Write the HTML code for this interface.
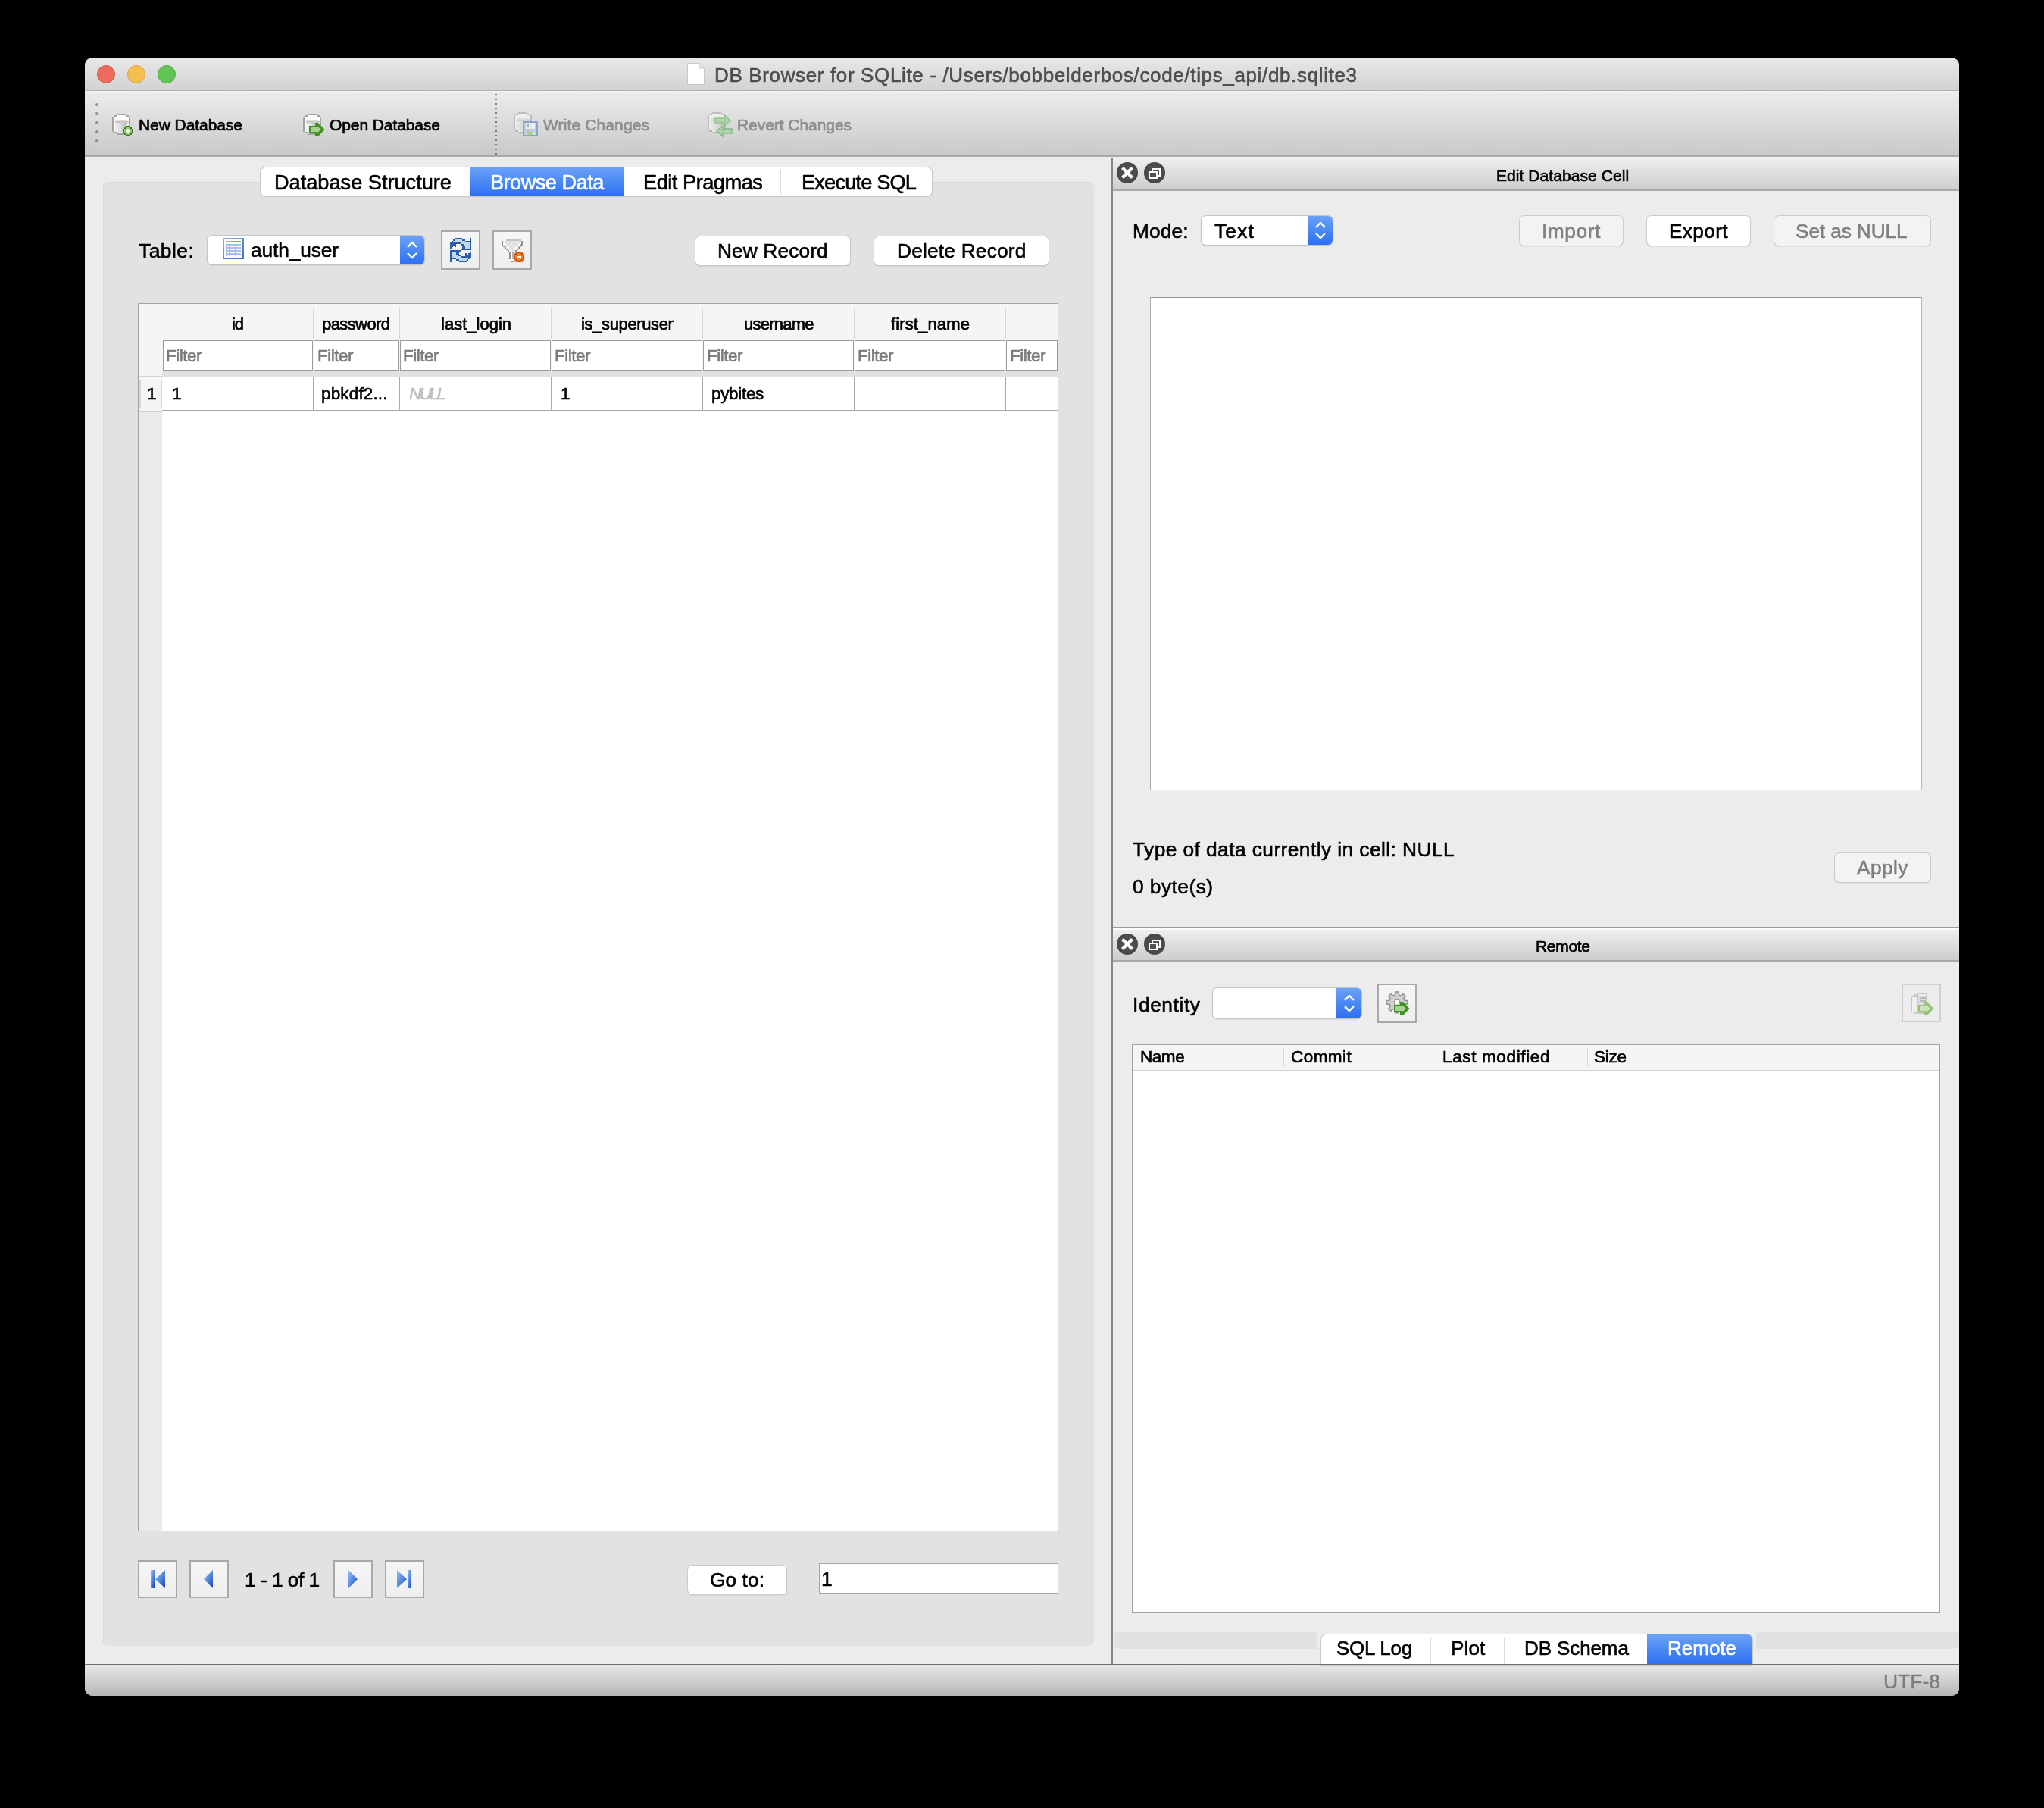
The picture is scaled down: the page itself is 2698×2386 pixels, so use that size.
<!DOCTYPE html>
<html><head><meta charset="utf-8"><style>
html,body{margin:0;padding:0;}
body{width:2698px;height:2386px;background:#000;position:relative;overflow:hidden;}
.a{position:absolute;}
.t{position:absolute;white-space:nowrap;line-height:1;font-family:"Liberation Sans",sans-serif;-webkit-font-smoothing:antialiased;will-change:transform;}
svg{overflow:visible}
</style></head><body>
<div class="a" style="left:112px;top:76px;width:2474px;height:2162px;background:#ececec;border-radius:10px;"></div>
<div class="a" style="left:112px;top:76px;width:2474px;height:43px;background:linear-gradient(#e8e8e8,#d2d2d2);border-radius:10px 10px 0 0;"></div>
<div class="a" style="left:112px;top:119px;width:2474px;height:1px;background:#adadad;"></div>
<div class="a" style="left:112px;top:120px;width:2474px;height:1px;background:#f6f6f6;"></div>
<div class="a" style="left:128px;top:86px;width:24px;height:24px;background:#ee6a5e;border:1px solid #d8574c;box-sizing:border-box;border-radius:50%;"></div>
<div class="a" style="left:168px;top:86px;width:24px;height:24px;background:#f5bf4f;border:1px solid #dba43b;box-sizing:border-box;border-radius:50%;"></div>
<div class="a" style="left:208px;top:86px;width:24px;height:24px;background:#61c454;border:1px solid #4fac42;box-sizing:border-box;border-radius:50%;"></div>
<svg class="a" style="left:906px;top:82px" width="25" height="31" viewBox="0 0 25 31"><path d="M1.5 1.5 H17 L23.5 8 V29.5 H1.5 Z" fill="#fff" stroke="#c8c8c8" stroke-width="1"/><path d="M17 1.5 V8 H23.5" fill="#e6e6e6" stroke="#c8c8c8" stroke-width="1"/></svg>
<div class="t" style="left:943.00px;top:85.90px;font-size:26px;color:#4d4d4d;font-weight:normal;font-style:normal;letter-spacing:0.642px;-webkit-text-stroke:0.6px #4d4d4d;">DB Browser for SQLite - /Users/bobbelderbos/code/tips_api/db.sqlite3</div>
<div class="a" style="left:112px;top:121px;width:2474px;height:84px;background:linear-gradient(#ececec,#c9c9c9);"></div>
<div class="a" style="left:112px;top:205px;width:2474px;height:2px;background:#a9a9a9;"></div>
<div class="a" style="left:112px;top:207px;width:2474px;height:1px;background:#f2f2f2;"></div>
<div class="a" style="left:126px;top:136px;width:4px;height:4px;background:#8e8e8e;border-radius:50%;"></div>
<div class="a" style="left:126px;top:148px;width:4px;height:4px;background:#8e8e8e;border-radius:50%;"></div>
<div class="a" style="left:126px;top:160px;width:4px;height:4px;background:#8e8e8e;border-radius:50%;"></div>
<div class="a" style="left:126px;top:172px;width:4px;height:4px;background:#8e8e8e;border-radius:50%;"></div>
<div class="a" style="left:126px;top:184px;width:4px;height:4px;background:#8e8e8e;border-radius:50%;"></div>
<div class="a" style="left:654px;top:124px;width:2px;height:80px;background:repeating-linear-gradient(#7a7a7a 0 2px, transparent 2px 6px);"></div>
<svg class="a" style="left:148px;top:148px;opacity:1.0" width="32" height="32" viewBox="0 0 16 16" shape-rendering="crispEdges"><rect x="3" y="1" width="6" height="1" fill="#a2a2a2"/><rect x="1" y="2" width="2" height="1" fill="#a2a2a2"/><rect x="3" y="2" width="6" height="1" fill="#fbfbfb"/><rect x="9" y="2" width="2" height="1" fill="#a2a2a2"/><rect x="0" y="3" width="1" height="1" fill="#a2a2a2"/><rect x="1" y="3" width="10" height="1" fill="#fbfbfb"/><rect x="11" y="3" width="1" height="1" fill="#a2a2a2"/><rect x="0" y="4" width="1" height="1" fill="#a2a2a2"/><rect x="1" y="4" width="10" height="1" fill="#fbfbfb"/><rect x="11" y="4" width="1" height="1" fill="#a2a2a2"/><rect x="0" y="5" width="1" height="1" fill="#a2a2a2"/><rect x="1" y="5" width="1" height="1" fill="#fbfbfb"/><rect x="2" y="5" width="8" height="1" fill="#dedede"/><rect x="10" y="5" width="1" height="1" fill="#fbfbfb"/><rect x="11" y="5" width="1" height="1" fill="#a2a2a2"/><rect x="0" y="6" width="1" height="1" fill="#a2a2a2"/><rect x="1" y="6" width="1" height="1" fill="#fbfbfb"/><rect x="2" y="6" width="9" height="1" fill="#c9c9c9"/><rect x="11" y="6" width="1" height="1" fill="#a2a2a2"/><rect x="0" y="7" width="1" height="1" fill="#a2a2a2"/><rect x="1" y="7" width="1" height="1" fill="#fbfbfb"/><rect x="2" y="7" width="2" height="1" fill="#ececec"/><rect x="4" y="7" width="2" height="1" fill="#e0e0e0"/><rect x="6" y="7" width="2" height="1" fill="#d2d2d2"/><rect x="8" y="7" width="2" height="1" fill="#c6c6c6"/><rect x="10" y="7" width="1" height="1" fill="#fbfbfb"/><rect x="11" y="7" width="1" height="1" fill="#a2a2a2"/><rect x="0" y="8" width="1" height="1" fill="#a2a2a2"/><rect x="1" y="8" width="1" height="1" fill="#fbfbfb"/><rect x="2" y="8" width="2" height="1" fill="#ececec"/><rect x="4" y="8" width="2" height="1" fill="#e0e0e0"/><rect x="6" y="8" width="2" height="1" fill="#d2d2d2"/><rect x="8" y="8" width="2" height="1" fill="#c6c6c6"/><rect x="10" y="8" width="1" height="1" fill="#fbfbfb"/><rect x="11" y="8" width="1" height="1" fill="#a2a2a2"/><rect x="0" y="9" width="1" height="1" fill="#a2a2a2"/><rect x="1" y="9" width="1" height="1" fill="#fbfbfb"/><rect x="2" y="9" width="2" height="1" fill="#ececec"/><rect x="4" y="9" width="2" height="1" fill="#e0e0e0"/><rect x="6" y="9" width="2" height="1" fill="#d2d2d2"/><rect x="8" y="9" width="2" height="1" fill="#c6c6c6"/><rect x="10" y="9" width="1" height="1" fill="#fbfbfb"/><rect x="11" y="9" width="1" height="1" fill="#a2a2a2"/><rect x="0" y="10" width="1" height="1" fill="#a2a2a2"/><rect x="1" y="10" width="1" height="1" fill="#fbfbfb"/><rect x="2" y="10" width="2" height="1" fill="#ececec"/><rect x="4" y="10" width="2" height="1" fill="#e0e0e0"/><rect x="6" y="10" width="2" height="1" fill="#d2d2d2"/><rect x="8" y="10" width="2" height="1" fill="#c6c6c6"/><rect x="10" y="10" width="1" height="1" fill="#fbfbfb"/><rect x="11" y="10" width="1" height="1" fill="#a2a2a2"/><rect x="0" y="11" width="1" height="1" fill="#a2a2a2"/><rect x="1" y="11" width="1" height="1" fill="#fbfbfb"/><rect x="2" y="11" width="2" height="1" fill="#ececec"/><rect x="4" y="11" width="2" height="1" fill="#e0e0e0"/><rect x="6" y="11" width="2" height="1" fill="#d2d2d2"/><rect x="8" y="11" width="2" height="1" fill="#c6c6c6"/><rect x="10" y="11" width="1" height="1" fill="#fbfbfb"/><rect x="11" y="11" width="1" height="1" fill="#a2a2a2"/><rect x="0" y="12" width="1" height="1" fill="#a2a2a2"/><rect x="1" y="12" width="1" height="1" fill="#fbfbfb"/><rect x="2" y="12" width="2" height="1" fill="#ececec"/><rect x="4" y="12" width="2" height="1" fill="#e0e0e0"/><rect x="6" y="12" width="2" height="1" fill="#d2d2d2"/><rect x="8" y="12" width="2" height="1" fill="#c6c6c6"/><rect x="10" y="12" width="1" height="1" fill="#fbfbfb"/><rect x="11" y="12" width="1" height="1" fill="#a2a2a2"/><rect x="1" y="13" width="2" height="1" fill="#a2a2a2"/><rect x="3" y="13" width="1" height="1" fill="#fbfbfb"/><rect x="4" y="13" width="2" height="1" fill="#ececec"/><rect x="6" y="13" width="2" height="1" fill="#e0e0e0"/><rect x="8" y="13" width="1" height="1" fill="#d2d2d2"/><rect x="9" y="13" width="2" height="1" fill="#a2a2a2"/><rect x="3" y="14" width="6" height="1" fill="#a2a2a2"/></svg>
<svg class="a" style="left:148px;top:148px" width="32" height="32" viewBox="0 0 16 16" shape-rendering="crispEdges"><path d="M9 9H12V10H13V11H14V14H13V15H12V16H9V15H8V14H7V11H8V10H9Z" fill="#2f7d14"/><path d="M9 10H12V11H13V14H12V15H9V14H8V11H9Z" fill="#96c878"/><rect x="9" y="12" width="3" height="1" fill="#fff"/><rect x="10" y="11" width="1" height="3" fill="#fff"/></svg>
<div class="t" style="left:183.00px;top:154.15px;font-size:21px;color:#000;font-weight:normal;font-style:normal;letter-spacing:-0.069px;-webkit-text-stroke:0.7px #000;">New Database</div>
<svg class="a" style="left:400px;top:148px;opacity:1.0" width="32" height="32" viewBox="0 0 16 16" shape-rendering="crispEdges"><rect x="3" y="1" width="6" height="1" fill="#a2a2a2"/><rect x="1" y="2" width="2" height="1" fill="#a2a2a2"/><rect x="3" y="2" width="6" height="1" fill="#fbfbfb"/><rect x="9" y="2" width="2" height="1" fill="#a2a2a2"/><rect x="0" y="3" width="1" height="1" fill="#a2a2a2"/><rect x="1" y="3" width="10" height="1" fill="#fbfbfb"/><rect x="11" y="3" width="1" height="1" fill="#a2a2a2"/><rect x="0" y="4" width="1" height="1" fill="#a2a2a2"/><rect x="1" y="4" width="10" height="1" fill="#fbfbfb"/><rect x="11" y="4" width="1" height="1" fill="#a2a2a2"/><rect x="0" y="5" width="1" height="1" fill="#a2a2a2"/><rect x="1" y="5" width="1" height="1" fill="#fbfbfb"/><rect x="2" y="5" width="8" height="1" fill="#dedede"/><rect x="10" y="5" width="1" height="1" fill="#fbfbfb"/><rect x="11" y="5" width="1" height="1" fill="#a2a2a2"/><rect x="0" y="6" width="1" height="1" fill="#a2a2a2"/><rect x="1" y="6" width="1" height="1" fill="#fbfbfb"/><rect x="2" y="6" width="9" height="1" fill="#c9c9c9"/><rect x="11" y="6" width="1" height="1" fill="#a2a2a2"/><rect x="0" y="7" width="1" height="1" fill="#a2a2a2"/><rect x="1" y="7" width="1" height="1" fill="#fbfbfb"/><rect x="2" y="7" width="2" height="1" fill="#ececec"/><rect x="4" y="7" width="2" height="1" fill="#e0e0e0"/><rect x="6" y="7" width="2" height="1" fill="#d2d2d2"/><rect x="8" y="7" width="2" height="1" fill="#c6c6c6"/><rect x="10" y="7" width="1" height="1" fill="#fbfbfb"/><rect x="11" y="7" width="1" height="1" fill="#a2a2a2"/><rect x="0" y="8" width="1" height="1" fill="#a2a2a2"/><rect x="1" y="8" width="1" height="1" fill="#fbfbfb"/><rect x="2" y="8" width="2" height="1" fill="#ececec"/><rect x="4" y="8" width="2" height="1" fill="#e0e0e0"/><rect x="6" y="8" width="2" height="1" fill="#d2d2d2"/><rect x="8" y="8" width="2" height="1" fill="#c6c6c6"/><rect x="10" y="8" width="1" height="1" fill="#fbfbfb"/><rect x="11" y="8" width="1" height="1" fill="#a2a2a2"/><rect x="0" y="9" width="1" height="1" fill="#a2a2a2"/><rect x="1" y="9" width="1" height="1" fill="#fbfbfb"/><rect x="2" y="9" width="2" height="1" fill="#ececec"/><rect x="4" y="9" width="2" height="1" fill="#e0e0e0"/><rect x="6" y="9" width="2" height="1" fill="#d2d2d2"/><rect x="8" y="9" width="2" height="1" fill="#c6c6c6"/><rect x="10" y="9" width="1" height="1" fill="#fbfbfb"/><rect x="11" y="9" width="1" height="1" fill="#a2a2a2"/><rect x="0" y="10" width="1" height="1" fill="#a2a2a2"/><rect x="1" y="10" width="1" height="1" fill="#fbfbfb"/><rect x="2" y="10" width="2" height="1" fill="#ececec"/><rect x="4" y="10" width="2" height="1" fill="#e0e0e0"/><rect x="6" y="10" width="2" height="1" fill="#d2d2d2"/><rect x="8" y="10" width="2" height="1" fill="#c6c6c6"/><rect x="10" y="10" width="1" height="1" fill="#fbfbfb"/><rect x="11" y="10" width="1" height="1" fill="#a2a2a2"/><rect x="0" y="11" width="1" height="1" fill="#a2a2a2"/><rect x="1" y="11" width="1" height="1" fill="#fbfbfb"/><rect x="2" y="11" width="2" height="1" fill="#ececec"/><rect x="4" y="11" width="2" height="1" fill="#e0e0e0"/><rect x="6" y="11" width="2" height="1" fill="#d2d2d2"/><rect x="8" y="11" width="2" height="1" fill="#c6c6c6"/><rect x="10" y="11" width="1" height="1" fill="#fbfbfb"/><rect x="11" y="11" width="1" height="1" fill="#a2a2a2"/><rect x="0" y="12" width="1" height="1" fill="#a2a2a2"/><rect x="1" y="12" width="1" height="1" fill="#fbfbfb"/><rect x="2" y="12" width="2" height="1" fill="#ececec"/><rect x="4" y="12" width="2" height="1" fill="#e0e0e0"/><rect x="6" y="12" width="2" height="1" fill="#d2d2d2"/><rect x="8" y="12" width="2" height="1" fill="#c6c6c6"/><rect x="10" y="12" width="1" height="1" fill="#fbfbfb"/><rect x="11" y="12" width="1" height="1" fill="#a2a2a2"/><rect x="1" y="13" width="2" height="1" fill="#a2a2a2"/><rect x="3" y="13" width="1" height="1" fill="#fbfbfb"/><rect x="4" y="13" width="2" height="1" fill="#ececec"/><rect x="6" y="13" width="2" height="1" fill="#e0e0e0"/><rect x="8" y="13" width="1" height="1" fill="#d2d2d2"/><rect x="9" y="13" width="2" height="1" fill="#a2a2a2"/><rect x="3" y="14" width="6" height="1" fill="#a2a2a2"/></svg>
<svg class="a" style="left:400px;top:148px" width="32" height="32" viewBox="0 0 16 16"><path d="M4 9H8V7H10L14.3 11.5L10 16H8V14H4Z" fill="#3f9420"/><path d="M5 10H9V9L12 11.5L9 14V13H5Z" fill="#a6d38e"/></svg>
<div class="t" style="left:435.00px;top:154.15px;font-size:21px;color:#000;font-weight:normal;font-style:normal;letter-spacing:-0.092px;-webkit-text-stroke:0.7px #000;">Open Database</div>
<svg class="a" style="left:678px;top:146px;opacity:0.55" width="32" height="32" viewBox="0 0 16 16" shape-rendering="crispEdges"><rect x="3" y="1" width="6" height="1" fill="#a2a2a2"/><rect x="1" y="2" width="2" height="1" fill="#a2a2a2"/><rect x="3" y="2" width="6" height="1" fill="#fbfbfb"/><rect x="9" y="2" width="2" height="1" fill="#a2a2a2"/><rect x="0" y="3" width="1" height="1" fill="#a2a2a2"/><rect x="1" y="3" width="10" height="1" fill="#fbfbfb"/><rect x="11" y="3" width="1" height="1" fill="#a2a2a2"/><rect x="0" y="4" width="1" height="1" fill="#a2a2a2"/><rect x="1" y="4" width="10" height="1" fill="#fbfbfb"/><rect x="11" y="4" width="1" height="1" fill="#a2a2a2"/><rect x="0" y="5" width="1" height="1" fill="#a2a2a2"/><rect x="1" y="5" width="1" height="1" fill="#fbfbfb"/><rect x="2" y="5" width="8" height="1" fill="#dedede"/><rect x="10" y="5" width="1" height="1" fill="#fbfbfb"/><rect x="11" y="5" width="1" height="1" fill="#a2a2a2"/><rect x="0" y="6" width="1" height="1" fill="#a2a2a2"/><rect x="1" y="6" width="1" height="1" fill="#fbfbfb"/><rect x="2" y="6" width="9" height="1" fill="#c9c9c9"/><rect x="11" y="6" width="1" height="1" fill="#a2a2a2"/><rect x="0" y="7" width="1" height="1" fill="#a2a2a2"/><rect x="1" y="7" width="1" height="1" fill="#fbfbfb"/><rect x="2" y="7" width="2" height="1" fill="#ececec"/><rect x="4" y="7" width="2" height="1" fill="#e0e0e0"/><rect x="6" y="7" width="2" height="1" fill="#d2d2d2"/><rect x="8" y="7" width="2" height="1" fill="#c6c6c6"/><rect x="10" y="7" width="1" height="1" fill="#fbfbfb"/><rect x="11" y="7" width="1" height="1" fill="#a2a2a2"/><rect x="0" y="8" width="1" height="1" fill="#a2a2a2"/><rect x="1" y="8" width="1" height="1" fill="#fbfbfb"/><rect x="2" y="8" width="2" height="1" fill="#ececec"/><rect x="4" y="8" width="2" height="1" fill="#e0e0e0"/><rect x="6" y="8" width="2" height="1" fill="#d2d2d2"/><rect x="8" y="8" width="2" height="1" fill="#c6c6c6"/><rect x="10" y="8" width="1" height="1" fill="#fbfbfb"/><rect x="11" y="8" width="1" height="1" fill="#a2a2a2"/><rect x="0" y="9" width="1" height="1" fill="#a2a2a2"/><rect x="1" y="9" width="1" height="1" fill="#fbfbfb"/><rect x="2" y="9" width="2" height="1" fill="#ececec"/><rect x="4" y="9" width="2" height="1" fill="#e0e0e0"/><rect x="6" y="9" width="2" height="1" fill="#d2d2d2"/><rect x="8" y="9" width="2" height="1" fill="#c6c6c6"/><rect x="10" y="9" width="1" height="1" fill="#fbfbfb"/><rect x="11" y="9" width="1" height="1" fill="#a2a2a2"/><rect x="0" y="10" width="1" height="1" fill="#a2a2a2"/><rect x="1" y="10" width="1" height="1" fill="#fbfbfb"/><rect x="2" y="10" width="2" height="1" fill="#ececec"/><rect x="4" y="10" width="2" height="1" fill="#e0e0e0"/><rect x="6" y="10" width="2" height="1" fill="#d2d2d2"/><rect x="8" y="10" width="2" height="1" fill="#c6c6c6"/><rect x="10" y="10" width="1" height="1" fill="#fbfbfb"/><rect x="11" y="10" width="1" height="1" fill="#a2a2a2"/><rect x="0" y="11" width="1" height="1" fill="#a2a2a2"/><rect x="1" y="11" width="1" height="1" fill="#fbfbfb"/><rect x="2" y="11" width="2" height="1" fill="#ececec"/><rect x="4" y="11" width="2" height="1" fill="#e0e0e0"/><rect x="6" y="11" width="2" height="1" fill="#d2d2d2"/><rect x="8" y="11" width="2" height="1" fill="#c6c6c6"/><rect x="10" y="11" width="1" height="1" fill="#fbfbfb"/><rect x="11" y="11" width="1" height="1" fill="#a2a2a2"/><rect x="0" y="12" width="1" height="1" fill="#a2a2a2"/><rect x="1" y="12" width="1" height="1" fill="#fbfbfb"/><rect x="2" y="12" width="2" height="1" fill="#ececec"/><rect x="4" y="12" width="2" height="1" fill="#e0e0e0"/><rect x="6" y="12" width="2" height="1" fill="#d2d2d2"/><rect x="8" y="12" width="2" height="1" fill="#c6c6c6"/><rect x="10" y="12" width="1" height="1" fill="#fbfbfb"/><rect x="11" y="12" width="1" height="1" fill="#a2a2a2"/><rect x="1" y="13" width="2" height="1" fill="#a2a2a2"/><rect x="3" y="13" width="1" height="1" fill="#fbfbfb"/><rect x="4" y="13" width="2" height="1" fill="#ececec"/><rect x="6" y="13" width="2" height="1" fill="#e0e0e0"/><rect x="8" y="13" width="1" height="1" fill="#d2d2d2"/><rect x="9" y="13" width="2" height="1" fill="#a2a2a2"/><rect x="3" y="14" width="6" height="1" fill="#a2a2a2"/></svg>
<svg class="a" style="left:678px;top:148px;opacity:0.75" width="32" height="32" viewBox="0 0 16 16" shape-rendering="crispEdges"><rect x="6" y="6" width="10" height="10" fill="#6f93d0"/><rect x="7" y="7" width="8" height="8" fill="#b6c9ea"/><rect x="8" y="7" width="6" height="4" fill="#f4f4f4"/><rect x="9" y="8" width="1" height="2" fill="#7f9fd6"/><rect x="8" y="13" width="6" height="2" fill="#eef2e4"/><rect x="9" y="13" width="4" height="2" fill="#9ccd6e"/></svg>
<div class="t" style="left:717.00px;top:154.15px;font-size:21px;color:#8e8e8e;font-weight:normal;font-style:normal;letter-spacing:0.125px;-webkit-text-stroke:0.7px #8e8e8e;">Write Changes</div>
<svg class="a" style="left:934px;top:146px;opacity:0.55" width="32" height="32" viewBox="0 0 16 16" shape-rendering="crispEdges"><rect x="3" y="1" width="6" height="1" fill="#a2a2a2"/><rect x="1" y="2" width="2" height="1" fill="#a2a2a2"/><rect x="3" y="2" width="6" height="1" fill="#fbfbfb"/><rect x="9" y="2" width="2" height="1" fill="#a2a2a2"/><rect x="0" y="3" width="1" height="1" fill="#a2a2a2"/><rect x="1" y="3" width="10" height="1" fill="#fbfbfb"/><rect x="11" y="3" width="1" height="1" fill="#a2a2a2"/><rect x="0" y="4" width="1" height="1" fill="#a2a2a2"/><rect x="1" y="4" width="10" height="1" fill="#fbfbfb"/><rect x="11" y="4" width="1" height="1" fill="#a2a2a2"/><rect x="0" y="5" width="1" height="1" fill="#a2a2a2"/><rect x="1" y="5" width="1" height="1" fill="#fbfbfb"/><rect x="2" y="5" width="8" height="1" fill="#dedede"/><rect x="10" y="5" width="1" height="1" fill="#fbfbfb"/><rect x="11" y="5" width="1" height="1" fill="#a2a2a2"/><rect x="0" y="6" width="1" height="1" fill="#a2a2a2"/><rect x="1" y="6" width="1" height="1" fill="#fbfbfb"/><rect x="2" y="6" width="9" height="1" fill="#c9c9c9"/><rect x="11" y="6" width="1" height="1" fill="#a2a2a2"/><rect x="0" y="7" width="1" height="1" fill="#a2a2a2"/><rect x="1" y="7" width="1" height="1" fill="#fbfbfb"/><rect x="2" y="7" width="2" height="1" fill="#ececec"/><rect x="4" y="7" width="2" height="1" fill="#e0e0e0"/><rect x="6" y="7" width="2" height="1" fill="#d2d2d2"/><rect x="8" y="7" width="2" height="1" fill="#c6c6c6"/><rect x="10" y="7" width="1" height="1" fill="#fbfbfb"/><rect x="11" y="7" width="1" height="1" fill="#a2a2a2"/><rect x="0" y="8" width="1" height="1" fill="#a2a2a2"/><rect x="1" y="8" width="1" height="1" fill="#fbfbfb"/><rect x="2" y="8" width="2" height="1" fill="#ececec"/><rect x="4" y="8" width="2" height="1" fill="#e0e0e0"/><rect x="6" y="8" width="2" height="1" fill="#d2d2d2"/><rect x="8" y="8" width="2" height="1" fill="#c6c6c6"/><rect x="10" y="8" width="1" height="1" fill="#fbfbfb"/><rect x="11" y="8" width="1" height="1" fill="#a2a2a2"/><rect x="0" y="9" width="1" height="1" fill="#a2a2a2"/><rect x="1" y="9" width="1" height="1" fill="#fbfbfb"/><rect x="2" y="9" width="2" height="1" fill="#ececec"/><rect x="4" y="9" width="2" height="1" fill="#e0e0e0"/><rect x="6" y="9" width="2" height="1" fill="#d2d2d2"/><rect x="8" y="9" width="2" height="1" fill="#c6c6c6"/><rect x="10" y="9" width="1" height="1" fill="#fbfbfb"/><rect x="11" y="9" width="1" height="1" fill="#a2a2a2"/><rect x="0" y="10" width="1" height="1" fill="#a2a2a2"/><rect x="1" y="10" width="1" height="1" fill="#fbfbfb"/><rect x="2" y="10" width="2" height="1" fill="#ececec"/><rect x="4" y="10" width="2" height="1" fill="#e0e0e0"/><rect x="6" y="10" width="2" height="1" fill="#d2d2d2"/><rect x="8" y="10" width="2" height="1" fill="#c6c6c6"/><rect x="10" y="10" width="1" height="1" fill="#fbfbfb"/><rect x="11" y="10" width="1" height="1" fill="#a2a2a2"/><rect x="0" y="11" width="1" height="1" fill="#a2a2a2"/><rect x="1" y="11" width="1" height="1" fill="#fbfbfb"/><rect x="2" y="11" width="2" height="1" fill="#ececec"/><rect x="4" y="11" width="2" height="1" fill="#e0e0e0"/><rect x="6" y="11" width="2" height="1" fill="#d2d2d2"/><rect x="8" y="11" width="2" height="1" fill="#c6c6c6"/><rect x="10" y="11" width="1" height="1" fill="#fbfbfb"/><rect x="11" y="11" width="1" height="1" fill="#a2a2a2"/><rect x="0" y="12" width="1" height="1" fill="#a2a2a2"/><rect x="1" y="12" width="1" height="1" fill="#fbfbfb"/><rect x="2" y="12" width="2" height="1" fill="#ececec"/><rect x="4" y="12" width="2" height="1" fill="#e0e0e0"/><rect x="6" y="12" width="2" height="1" fill="#d2d2d2"/><rect x="8" y="12" width="2" height="1" fill="#c6c6c6"/><rect x="10" y="12" width="1" height="1" fill="#fbfbfb"/><rect x="11" y="12" width="1" height="1" fill="#a2a2a2"/><rect x="1" y="13" width="2" height="1" fill="#a2a2a2"/><rect x="3" y="13" width="1" height="1" fill="#fbfbfb"/><rect x="4" y="13" width="2" height="1" fill="#ececec"/><rect x="6" y="13" width="2" height="1" fill="#e0e0e0"/><rect x="8" y="13" width="1" height="1" fill="#d2d2d2"/><rect x="9" y="13" width="2" height="1" fill="#a2a2a2"/><rect x="3" y="14" width="6" height="1" fill="#a2a2a2"/></svg>
<svg class="a" style="left:934px;top:148px;opacity:0.7" width="32" height="32" viewBox="0 0 16 16"><path d="M5 4H11V2L15 5.5L11 9V7H5Z" fill="#9ed69a" stroke="#6fbf6a" stroke-width="0.8"/><path d="M16 11H10V9L6 12.5L10 16V14H16Z" fill="#9ed69a" stroke="#6aa868" stroke-width="0.8"/><rect x="9" y="7.5" width="1" height="2" fill="#b8b8b8"/></svg>
<div class="t" style="left:973.00px;top:154.15px;font-size:21px;color:#8e8e8e;font-weight:normal;font-style:normal;letter-spacing:-0.056px;-webkit-text-stroke:0.7px #8e8e8e;">Revert Changes</div>
<div class="a" style="left:112px;top:2196px;width:2474px;height:1px;background:#6e6e6e;"></div>
<div class="a" style="left:112px;top:2197px;width:2474px;height:41px;background:linear-gradient(#e8e8e8,#b6b6b6);border-radius:0 0 10px 10px;"></div>
<div class="t" style="left:2486.00px;top:2206.47px;font-size:26.5px;color:#7c7c7c;font-weight:normal;font-style:normal;letter-spacing:-0.032px;-webkit-text-stroke:0.4px #7c7c7c;">UTF-8</div>
<div class="a" style="left:136px;top:240px;width:1308px;height:1932px;background:#e2e2e2;border-radius:7px;box-shadow:inset 1px 1px 0 #d8d8d8;"></div>
<div class="a" style="left:344px;top:221px;width:886px;height:38px;background:#fff;border-radius:7px;box-shadow:0 0 0 1px #c9c9c9, 0 1px 1px rgba(0,0,0,0.25);"></div>
<div class="a" style="left:620px;top:221px;width:204px;height:38px;background:linear-gradient(#6aa1f8,#2c6ff2);"></div>
<div class="a" style="left:1030px;top:224px;width:1px;height:33px;background:#dcdcdc;"></div>
<div class="t" style="left:362.00px;top:227.18px;font-size:27.2px;color:#000;font-weight:normal;font-style:normal;letter-spacing:-0.019px;-webkit-text-stroke:0.6px #000;">Database Structure</div>
<div class="t" style="left:647.00px;top:227.18px;font-size:27.2px;color:#fff;font-weight:normal;font-style:normal;letter-spacing:-0.536px;-webkit-text-stroke:0.6px #fff;">Browse Data</div>
<div class="t" style="left:849.00px;top:227.18px;font-size:27.2px;color:#000;font-weight:normal;font-style:normal;letter-spacing:-0.485px;-webkit-text-stroke:0.6px #000;">Edit Pragmas</div>
<div class="t" style="left:1058.00px;top:227.18px;font-size:27.2px;color:#000;font-weight:normal;font-style:normal;letter-spacing:-0.821px;-webkit-text-stroke:0.6px #000;">Execute SQL</div>
<div class="t" style="left:183.00px;top:318.14px;font-size:26.3px;color:#000;font-weight:normal;font-style:normal;letter-spacing:0.516px;-webkit-text-stroke:0.6px #000;">Table:</div>
<div class="a" style="left:274px;top:311px;width:286px;height:38px;background:#fff;border-radius:6px;box-shadow:0 0 0 1px #c4c4c4, 0 1px 1.5px rgba(0,0,0,0.3);"></div>
<div class="a" style="left:528px;top:311px;width:32px;height:38px;background:linear-gradient(#6aa1f8,#2c6ff2);border-radius:0 6px 6px 0;"></div>
<svg class="a" style="left:535.0px;top:316.0px" width="18" height="28" viewBox="0 0 18 28"><path d="M3 10 L9 4 L15 10 M3 18 L9 24 L15 18" fill="none" stroke="#fff" stroke-width="2.4"/></svg>
<svg class="a" style="left:294px;top:314px" width="28" height="28" viewBox="0 0 28 28" shape-rendering="crispEdges"><defs><linearGradient id="tfr" x1="0" y1="0" x2="1" y2="1"><stop offset="0" stop-color="#8fb2e6"/><stop offset="1" stop-color="#3b70bf"/></linearGradient><linearGradient id="tgr" x1="0" x2="1"><stop offset="0" stop-color="#9ad08e"/><stop offset="1" stop-color="#5aae58"/></linearGradient></defs><rect x="0" y="0" width="28" height="28" fill="url(#tfr)"/><rect x="2" y="2" width="24" height="24" fill="#fdfdfe"/><rect x="4" y="4" width="20" height="2" fill="url(#tgr)"/><g fill="#a6c2ea"><rect x="4" y="8" width="20" height="2"/><rect x="4" y="8" width="2" height="16"/><rect x="8" y="8" width="2" height="16"/><rect x="16" y="8" width="2" height="16"/><rect x="4" y="12" width="20" height="2"/><rect x="4" y="16" width="20" height="2"/><rect x="4" y="20" width="20" height="2"/></g></svg>
<div class="t" style="left:331.00px;top:317.14px;font-size:26.3px;color:#000;font-weight:normal;font-style:normal;letter-spacing:-0.129px;-webkit-text-stroke:0.6px #000;">auth_user</div>
<div class="a" style="left:582px;top:304px;width:52px;height:52px;background:linear-gradient(#f6f6f6,#eeeeee);border:2px solid #a9a9a9;box-sizing:border-box;"></div>
<div class="a" style="left:650px;top:304px;width:52px;height:52px;background:linear-gradient(#f6f6f6,#eeeeee);border:2px solid #a9a9a9;box-sizing:border-box;"></div>
<svg class="a" style="left:592px;top:314px;opacity:1.0" width="32" height="32" viewBox="0 0 16 16" shape-rendering="crispEdges"><rect x="4" y="0" width="5" height="1" fill="#2a5da8"/><rect x="14" y="0" width="1" height="1" fill="#2a5da8"/><rect x="3" y="1" width="1" height="1" fill="#2a5da8"/><rect x="4" y="1" width="5" height="1" fill="#c3d6ef"/><rect x="9" y="1" width="2" height="1" fill="#2a5da8"/><rect x="14" y="1" width="1" height="1" fill="#2a5da8"/><rect x="2" y="2" width="1" height="1" fill="#2a5da8"/><rect x="3" y="2" width="8" height="1" fill="#c3d6ef"/><rect x="11" y="2" width="4" height="1" fill="#2a5da8"/><rect x="1" y="3" width="7" height="1" fill="#2a5da8"/><rect x="8" y="3" width="6" height="1" fill="#c3d6ef"/><rect x="14" y="3" width="1" height="1" fill="#2a5da8"/><rect x="1" y="4" width="4" height="1" fill="#2a5da8"/><rect x="8" y="4" width="2" height="1" fill="#2a5da8"/><rect x="10" y="4" width="4" height="1" fill="#c3d6ef"/><rect x="14" y="4" width="1" height="1" fill="#2a5da8"/><rect x="1" y="5" width="2" height="1" fill="#2a5da8"/><rect x="4" y="5" width="1" height="1" fill="#2a5da8"/><rect x="9" y="5" width="2" height="1" fill="#2a5da8"/><rect x="11" y="5" width="3" height="1" fill="#c3d6ef"/><rect x="14" y="5" width="1" height="1" fill="#2a5da8"/><rect x="1" y="6" width="1" height="1" fill="#2a5da8"/><rect x="9" y="6" width="2" height="1" fill="#2a5da8"/><rect x="11" y="6" width="3" height="1" fill="#c3d6ef"/><rect x="14" y="6" width="1" height="1" fill="#2a5da8"/><rect x="8" y="7" width="7" height="1" fill="#2a5da8"/><rect x="1" y="8" width="7" height="1" fill="#2a5da8"/><rect x="1" y="9" width="1" height="1" fill="#2a5da8"/><rect x="2" y="9" width="3" height="1" fill="#c3d6ef"/><rect x="5" y="9" width="2" height="1" fill="#2a5da8"/><rect x="14" y="9" width="1" height="1" fill="#2a5da8"/><rect x="1" y="10" width="1" height="1" fill="#2a5da8"/><rect x="2" y="10" width="3" height="1" fill="#c3d6ef"/><rect x="5" y="10" width="2" height="1" fill="#2a5da8"/><rect x="11" y="10" width="1" height="1" fill="#2a5da8"/><rect x="13" y="10" width="2" height="1" fill="#2a5da8"/><rect x="1" y="11" width="1" height="1" fill="#2a5da8"/><rect x="2" y="11" width="4" height="1" fill="#c3d6ef"/><rect x="6" y="11" width="2" height="1" fill="#2a5da8"/><rect x="11" y="11" width="4" height="1" fill="#2a5da8"/><rect x="1" y="12" width="1" height="1" fill="#2a5da8"/><rect x="2" y="12" width="6" height="1" fill="#c3d6ef"/><rect x="8" y="12" width="7" height="1" fill="#2a5da8"/><rect x="1" y="13" width="4" height="1" fill="#2a5da8"/><rect x="5" y="13" width="8" height="1" fill="#c3d6ef"/><rect x="13" y="13" width="1" height="1" fill="#2a5da8"/><rect x="1" y="14" width="1" height="1" fill="#2a5da8"/><rect x="5" y="14" width="2" height="1" fill="#2a5da8"/><rect x="7" y="14" width="5" height="1" fill="#c3d6ef"/><rect x="12" y="14" width="1" height="1" fill="#2a5da8"/><rect x="1" y="15" width="1" height="1" fill="#2a5da8"/><rect x="7" y="15" width="5" height="1" fill="#2a5da8"/></svg>
<svg class="a" style="left:660px;top:314px;opacity:1.0" width="32" height="32" viewBox="0 0 16 16" shape-rendering="crispEdges"><rect x="4" y="1" width="10" height="1" fill="#c4c4c4"/><rect x="1" y="2" width="1" height="1" fill="#909090"/><rect x="2" y="2" width="12" height="1" fill="#e2e2e2"/><rect x="14" y="2" width="1" height="1" fill="#909090"/><rect x="1" y="3" width="1" height="1" fill="#909090"/><rect x="2" y="3" width="1" height="1" fill="#ffffff"/><rect x="3" y="3" width="10" height="1" fill="#e2e2e2"/><rect x="13" y="3" width="1" height="1" fill="#ffffff"/><rect x="14" y="3" width="1" height="1" fill="#909090"/><rect x="1" y="4" width="1" height="1" fill="#909090"/><rect x="2" y="4" width="1" height="1" fill="#f2f2f2"/><rect x="3" y="4" width="1" height="1" fill="#ffffff"/><rect x="4" y="4" width="8" height="1" fill="#e2e2e2"/><rect x="12" y="4" width="1" height="1" fill="#ffffff"/><rect x="13" y="4" width="1" height="1" fill="#b4b4b4"/><rect x="14" y="4" width="1" height="1" fill="#909090"/><rect x="2" y="5" width="1" height="1" fill="#909090"/><rect x="3" y="5" width="1" height="1" fill="#b4b4b4"/><rect x="4" y="5" width="1" height="1" fill="#ffffff"/><rect x="5" y="5" width="6" height="1" fill="#e2e2e2"/><rect x="11" y="5" width="1" height="1" fill="#ffffff"/><rect x="12" y="5" width="1" height="1" fill="#b4b4b4"/><rect x="13" y="5" width="1" height="1" fill="#909090"/><rect x="3" y="6" width="1" height="1" fill="#909090"/><rect x="4" y="6" width="1" height="1" fill="#f2f2f2"/><rect x="5" y="6" width="1" height="1" fill="#ffffff"/><rect x="6" y="6" width="4" height="1" fill="#e2e2e2"/><rect x="10" y="6" width="1" height="1" fill="#ffffff"/><rect x="11" y="6" width="1" height="1" fill="#f2f2f2"/><rect x="12" y="6" width="1" height="1" fill="#909090"/><rect x="4" y="7" width="1" height="1" fill="#909090"/><rect x="5" y="7" width="1" height="1" fill="#f2f2f2"/><rect x="6" y="7" width="1" height="1" fill="#ffffff"/><rect x="7" y="7" width="2" height="1" fill="#e2e2e2"/><rect x="9" y="7" width="1" height="1" fill="#ffffff"/><rect x="10" y="7" width="1" height="1" fill="#f2f2f2"/><rect x="11" y="7" width="1" height="1" fill="#909090"/><rect x="5" y="8" width="1" height="1" fill="#909090"/><rect x="6" y="8" width="1" height="1" fill="#f2f2f2"/><rect x="7" y="8" width="2" height="1" fill="#e2e2e2"/><rect x="9" y="8" width="1" height="1" fill="#f2f2f2"/><rect x="10" y="8" width="1" height="1" fill="#909090"/><rect x="6" y="9" width="1" height="1" fill="#909090"/><rect x="7" y="9" width="1" height="1" fill="#ffffff"/><rect x="8" y="9" width="1" height="1" fill="#b4b4b4"/><rect x="9" y="9" width="1" height="1" fill="#e2e2e2"/><rect x="10" y="9" width="1" height="1" fill="#e2905a"/><rect x="11" y="9" width="3" height="1" fill="#c44a06"/><rect x="14" y="9" width="1" height="1" fill="#e2905a"/><rect x="6" y="10" width="1" height="1" fill="#909090"/><rect x="7" y="10" width="1" height="1" fill="#ffffff"/><rect x="8" y="10" width="1" height="1" fill="#b4b4b4"/><rect x="9" y="10" width="1" height="1" fill="#e2905a"/><rect x="10" y="10" width="1" height="1" fill="#c44a06"/><rect x="11" y="10" width="3" height="1" fill="#fa7c1c"/><rect x="14" y="10" width="1" height="1" fill="#c44a06"/><rect x="15" y="10" width="1" height="1" fill="#e2905a"/><rect x="6" y="11" width="1" height="1" fill="#909090"/><rect x="7" y="11" width="1" height="1" fill="#ffffff"/><rect x="8" y="11" width="1" height="1" fill="#b4b4b4"/><rect x="9" y="11" width="1" height="1" fill="#c44a06"/><rect x="10" y="11" width="5" height="1" fill="#fa7c1c"/><rect x="15" y="11" width="1" height="1" fill="#c44a06"/><rect x="6" y="12" width="1" height="1" fill="#909090"/><rect x="7" y="12" width="1" height="1" fill="#ffffff"/><rect x="8" y="12" width="1" height="1" fill="#b4b4b4"/><rect x="9" y="12" width="1" height="1" fill="#c44a06"/><rect x="10" y="12" width="1" height="1" fill="#fa7c1c"/><rect x="11" y="12" width="3" height="1" fill="#ffffff"/><rect x="14" y="12" width="1" height="1" fill="#fa7c1c"/><rect x="15" y="12" width="1" height="1" fill="#c44a06"/><rect x="6" y="13" width="1" height="1" fill="#909090"/><rect x="7" y="13" width="1" height="1" fill="#ffffff"/><rect x="8" y="13" width="1" height="1" fill="#b4b4b4"/><rect x="9" y="13" width="1" height="1" fill="#c44a06"/><rect x="10" y="13" width="5" height="1" fill="#fa7c1c"/><rect x="15" y="13" width="1" height="1" fill="#c44a06"/><rect x="7" y="14" width="2" height="1" fill="#ffffff"/><rect x="9" y="14" width="1" height="1" fill="#e2905a"/><rect x="10" y="14" width="1" height="1" fill="#c44a06"/><rect x="11" y="14" width="3" height="1" fill="#fa7c1c"/><rect x="14" y="14" width="1" height="1" fill="#c44a06"/><rect x="15" y="14" width="1" height="1" fill="#e2905a"/><rect x="7" y="15" width="2" height="1" fill="#909090"/><rect x="10" y="15" width="1" height="1" fill="#e2905a"/><rect x="11" y="15" width="3" height="1" fill="#c44a06"/><rect x="14" y="15" width="1" height="1" fill="#e2905a"/></svg>
<div class="a" style="left:918px;top:312px;width:204px;height:38px;background:#ffffff;border-radius:6px;box-shadow:0 0 0 1px #cbcbcb, 0 1px 1.5px rgba(0,0,0,0.28);"></div>
<div class="a" style="left:1154px;top:312px;width:230px;height:38px;background:#ffffff;border-radius:6px;box-shadow:0 0 0 1px #cbcbcb, 0 1px 1.5px rgba(0,0,0,0.28);"></div>
<div class="t" style="left:947.00px;top:318.14px;font-size:26.3px;color:#000;font-weight:normal;font-style:normal;letter-spacing:0.106px;-webkit-text-stroke:0.6px #000;">New Record</div>
<div class="t" style="left:1183.60px;top:318.14px;font-size:26.3px;color:#000;font-weight:normal;font-style:normal;letter-spacing:0.195px;-webkit-text-stroke:0.6px #000;">Delete Record</div>
<div class="a" style="left:182px;top:400px;width:1215px;height:1621px;background:#fff;border:1px solid #a4a4a4;box-sizing:border-box;"></div>
<div class="a" style="left:183px;top:401px;width:1213px;height:96px;background:#f5f5f5;"></div>
<div class="a" style="left:183px;top:490px;width:1213px;height:8px;background:#e1e1e1;"></div>
<div class="a" style="left:183px;top:490px;width:31px;height:8px;background:#f5f5f5;"></div>
<div class="a" style="left:183px;top:496px;width:31px;height:2px;background:#d2d2d2;"></div>
<div class="a" style="left:183px;top:498px;width:31px;height:1522px;background:#ebebeb;"></div>
<div class="a" style="left:183px;top:498px;width:31px;height:44px;background:#f5f5f5;"></div>
<div class="a" style="left:184px;top:502px;width:2px;height:36px;background:#d8d8d8;"></div>
<div class="a" style="left:212px;top:502px;width:2px;height:36px;background:#d8d8d8;"></div>
<div class="a" style="left:183px;top:542px;width:31px;height:2px;background:#cccccc;"></div>
<div class="a" style="left:413px;top:407px;width:1px;height:41px;background:#d5d5d5;"></div>
<div class="a" style="left:413px;top:498px;width:1px;height:44px;background:#a8a8a8;"></div>
<div class="a" style="left:527px;top:407px;width:1px;height:41px;background:#d5d5d5;"></div>
<div class="a" style="left:527px;top:498px;width:1px;height:44px;background:#a8a8a8;"></div>
<div class="a" style="left:727px;top:407px;width:1px;height:41px;background:#d5d5d5;"></div>
<div class="a" style="left:727px;top:498px;width:1px;height:44px;background:#a8a8a8;"></div>
<div class="a" style="left:927px;top:407px;width:1px;height:41px;background:#d5d5d5;"></div>
<div class="a" style="left:927px;top:498px;width:1px;height:44px;background:#a8a8a8;"></div>
<div class="a" style="left:1127px;top:407px;width:1px;height:41px;background:#d5d5d5;"></div>
<div class="a" style="left:1127px;top:498px;width:1px;height:44px;background:#a8a8a8;"></div>
<div class="a" style="left:1327px;top:407px;width:1px;height:41px;background:#d5d5d5;"></div>
<div class="a" style="left:1327px;top:498px;width:1px;height:44px;background:#a8a8a8;"></div>
<div class="a" style="left:214px;top:541px;width:1182px;height:1px;background:#a8a8a8;"></div>
<div class="a" style="left:215px;top:449px;width:198px;height:40px;background:#fff;border:1px solid #9c9c9c;box-sizing:border-box;"></div>
<div class="a" style="left:414px;top:449px;width:113px;height:40px;background:#fff;border:1px solid #9c9c9c;box-sizing:border-box;"></div>
<div class="a" style="left:528px;top:449px;width:199px;height:40px;background:#fff;border:1px solid #9c9c9c;box-sizing:border-box;"></div>
<div class="a" style="left:728px;top:449px;width:199px;height:40px;background:#fff;border:1px solid #9c9c9c;box-sizing:border-box;"></div>
<div class="a" style="left:928px;top:449px;width:199px;height:40px;background:#fff;border:1px solid #9c9c9c;box-sizing:border-box;"></div>
<div class="a" style="left:1128px;top:449px;width:199px;height:40px;background:#fff;border:1px solid #9c9c9c;box-sizing:border-box;"></div>
<div class="a" style="left:1328px;top:449px;width:68px;height:40px;background:#fff;border:1px solid #9c9c9c;box-sizing:border-box;"></div>
<div class="t" style="left:305.60px;top:417.30px;font-size:22px;color:#000;font-weight:normal;font-style:normal;letter-spacing:-1.060px;-webkit-text-stroke:0.7px #000;">id</div>
<div class="t" style="left:425.40px;top:417.30px;font-size:22px;color:#000;font-weight:normal;font-style:normal;letter-spacing:-0.594px;-webkit-text-stroke:0.7px #000;">password</div>
<div class="t" style="left:581.60px;top:417.30px;font-size:22px;color:#000;font-weight:normal;font-style:normal;letter-spacing:0.006px;-webkit-text-stroke:0.7px #000;">last_login</div>
<div class="t" style="left:767.00px;top:417.30px;font-size:22px;color:#000;font-weight:normal;font-style:normal;letter-spacing:-0.368px;-webkit-text-stroke:0.7px #000;">is_superuser</div>
<div class="t" style="left:981.50px;top:417.30px;font-size:22px;color:#000;font-weight:normal;font-style:normal;letter-spacing:-0.756px;-webkit-text-stroke:0.7px #000;">username</div>
<div class="t" style="left:1175.70px;top:417.30px;font-size:22px;color:#000;font-weight:normal;font-style:normal;letter-spacing:0.129px;-webkit-text-stroke:0.7px #000;">first_name</div>
<div class="t" style="left:219.00px;top:458.88px;font-size:22.5px;color:#7a7a7a;font-weight:normal;font-style:normal;letter-spacing:-0.490px;-webkit-text-stroke:0.6px #7a7a7a;">Filter</div>
<div class="t" style="left:418.50px;top:458.88px;font-size:22.5px;color:#7a7a7a;font-weight:normal;font-style:normal;letter-spacing:-0.490px;-webkit-text-stroke:0.6px #7a7a7a;">Filter</div>
<div class="t" style="left:532.00px;top:458.88px;font-size:22.5px;color:#7a7a7a;font-weight:normal;font-style:normal;letter-spacing:-0.490px;-webkit-text-stroke:0.6px #7a7a7a;">Filter</div>
<div class="t" style="left:732.30px;top:458.88px;font-size:22.5px;color:#7a7a7a;font-weight:normal;font-style:normal;letter-spacing:-0.490px;-webkit-text-stroke:0.6px #7a7a7a;">Filter</div>
<div class="t" style="left:932.50px;top:458.88px;font-size:22.5px;color:#7a7a7a;font-weight:normal;font-style:normal;letter-spacing:-0.490px;-webkit-text-stroke:0.6px #7a7a7a;">Filter</div>
<div class="t" style="left:1132.40px;top:458.88px;font-size:22.5px;color:#7a7a7a;font-weight:normal;font-style:normal;letter-spacing:-0.490px;-webkit-text-stroke:0.6px #7a7a7a;">Filter</div>
<div class="t" style="left:1332.50px;top:458.88px;font-size:22.5px;color:#7a7a7a;font-weight:normal;font-style:normal;letter-spacing:-0.490px;-webkit-text-stroke:0.6px #7a7a7a;">Filter</div>
<div class="t" style="left:194.00px;top:508.88px;font-size:22.5px;color:#000;font-weight:normal;font-style:normal;letter-spacing:0.000px;-webkit-text-stroke:0.6px #000;">1</div>
<div class="t" style="left:226.80px;top:508.88px;font-size:22.5px;color:#000;font-weight:normal;font-style:normal;letter-spacing:0.000px;-webkit-text-stroke:0.6px #000;">1</div>
<div class="t" style="left:424.00px;top:508.88px;font-size:22.5px;color:#000;font-weight:normal;font-style:normal;letter-spacing:0.152px;-webkit-text-stroke:0.6px #000;">pbkdf2...</div>
<div class="t" style="left:540.00px;top:508.88px;font-size:22.5px;color:#bdbdbd;font-weight:normal;font-style:italic;letter-spacing:-2.863px;-webkit-text-stroke:0.6px #bdbdbd;">NULL</div>
<div class="t" style="left:740.00px;top:508.88px;font-size:22.5px;color:#000;font-weight:normal;font-style:normal;letter-spacing:0.000px;-webkit-text-stroke:0.6px #000;">1</div>
<div class="t" style="left:939.00px;top:508.88px;font-size:22.5px;color:#000;font-weight:normal;font-style:normal;letter-spacing:-0.321px;-webkit-text-stroke:0.6px #000;">pybites</div>
<div class="a" style="left:182px;top:2059px;width:52px;height:50px;background:linear-gradient(#f6f6f6,#eeeeee);border:2px solid #a9a9a9;box-sizing:border-box;"></div>
<div class="a" style="left:250px;top:2059px;width:52px;height:50px;background:linear-gradient(#f6f6f6,#eeeeee);border:2px solid #a9a9a9;box-sizing:border-box;"></div>
<div class="a" style="left:440px;top:2059px;width:52px;height:50px;background:linear-gradient(#f6f6f6,#eeeeee);border:2px solid #a9a9a9;box-sizing:border-box;"></div>
<div class="a" style="left:508px;top:2059px;width:52px;height:50px;background:linear-gradient(#f6f6f6,#eeeeee);border:2px solid #a9a9a9;box-sizing:border-box;"></div>
<svg width="0" height="0" style="position:absolute"><defs><linearGradient id="navgr" x1="0" y1="0" x2="1" y2="1"><stop offset="0" stop-color="#9cc0f4"/><stop offset="0.55" stop-color="#4f84dc"/><stop offset="1" stop-color="#0f3fb4"/></linearGradient></defs></svg>
<svg class="a" style="left:198px;top:2071px" width="22" height="26" viewBox="0 0 22 26"><rect x="1" y="1" width="5" height="24" fill="url(#navgr)"/><path d="M20 1 V25 L7 13 Z" fill="url(#navgr)"/></svg>
<svg class="a" style="left:266px;top:2071px" width="22" height="26" viewBox="0 0 22 26"><path d="M15 1 V25 L3 13 Z" fill="url(#navgr)"/></svg>
<svg class="a" style="left:456px;top:2071px" width="22" height="26" viewBox="0 0 22 26"><path d="M4 1 V25 L16 13 Z" fill="url(#navgr)"/></svg>
<svg class="a" style="left:523px;top:2071px" width="22" height="26" viewBox="0 0 22 26"><path d="M1 1 V25 L14 13 Z" fill="url(#navgr)"/><rect x="15" y="1" width="5" height="24" fill="url(#navgr)"/></svg>
<div class="t" style="left:322.50px;top:2072.14px;font-size:26.3px;color:#000;font-weight:normal;font-style:normal;letter-spacing:-0.517px;-webkit-text-stroke:0.6px #000;">1 - 1 of 1</div>
<div class="a" style="left:908px;top:2066px;width:130px;height:38px;background:#ffffff;border-radius:6px;box-shadow:0 0 0 1px #cbcbcb, 0 1px 1.5px rgba(0,0,0,0.28);"></div>
<div class="t" style="left:937.00px;top:2072.14px;font-size:26.3px;color:#000;font-weight:normal;font-style:normal;letter-spacing:0.066px;-webkit-text-stroke:0.6px #000;">Go to:</div>
<div class="a" style="left:1081px;top:2063px;width:316px;height:40px;background:#fff;border:1px solid #a6a6a6;box-sizing:border-box;"></div>
<div class="t" style="left:1084.00px;top:2071.14px;font-size:26.3px;color:#000;font-weight:normal;font-style:normal;letter-spacing:0.000px;-webkit-text-stroke:0.6px #000;">1</div>
<div class="a" style="left:1467px;top:208px;width:2px;height:1988px;background:#858585;"></div>
<div class="a" style="left:1469px;top:208px;width:1117px;height:42px;background:linear-gradient(#efefef,#cdcdcd);"></div>
<div class="a" style="left:1469px;top:250px;width:1117px;height:2px;background:#a9a9a9;"></div>
<div class="a" style="left:1474px;top:214px;width:28px;height:28px;border-radius:50%;background:radial-gradient(#555 0%,#4a4a4a 60%,#3c3c3c 100%);"></div>
<div class="a" style="left:1510px;top:214px;width:28px;height:28px;border-radius:50%;background:radial-gradient(#555 0%,#4a4a4a 60%,#3c3c3c 100%);"></div>
<svg class="a" style="left:1474px;top:214px" width="28" height="28" viewBox="0 0 28 28"><path d="M9 9L19 19M19 9L9 19" stroke="#fff" stroke-width="4.2" stroke-linecap="square"/></svg>
<svg class="a" style="left:1510px;top:214px" width="28" height="28" viewBox="0 0 28 28" shape-rendering="crispEdges"><rect x="7" y="13" width="10" height="8" fill="none" stroke="#fff" stroke-width="2"/><path d="M11 12V9H21V18H18" fill="none" stroke="#fff" stroke-width="2"/></svg>
<div class="t" style="left:1975.00px;top:221.15px;font-size:21px;color:#000;font-weight:normal;font-style:normal;letter-spacing:0.066px;-webkit-text-stroke:0.7px #000;">Edit Database Cell</div>
<div class="t" style="left:1495.00px;top:292.14px;font-size:26.3px;color:#000;font-weight:normal;font-style:normal;letter-spacing:0.096px;-webkit-text-stroke:0.6px #000;">Mode:</div>
<div class="a" style="left:1586px;top:285px;width:173px;height:38px;background:#fff;border-radius:6px;box-shadow:0 0 0 1px #c4c4c4, 0 1px 1.5px rgba(0,0,0,0.3);"></div>
<div class="a" style="left:1726px;top:285px;width:33px;height:38px;background:linear-gradient(#6aa1f8,#2c6ff2);border-radius:0 6px 6px 0;"></div>
<svg class="a" style="left:1733.5px;top:290.0px" width="18" height="28" viewBox="0 0 18 28"><path d="M3 10 L9 4 L15 10 M3 18 L9 24 L15 18" fill="none" stroke="#fff" stroke-width="2.4"/></svg>
<div class="t" style="left:1603.00px;top:292.14px;font-size:26.3px;color:#000;font-weight:normal;font-style:normal;letter-spacing:1.180px;-webkit-text-stroke:0.6px #000;">Text</div>
<div class="a" style="left:2006px;top:285px;width:136px;height:39px;background:#f3f3f3;border-radius:6px;box-shadow:0 0 0 1px #cbcbcb, 0 1px 1.5px rgba(0,0,0,0.28);"></div>
<div class="a" style="left:2174px;top:285px;width:136px;height:39px;background:#ffffff;border-radius:6px;box-shadow:0 0 0 1px #cbcbcb, 0 1px 1.5px rgba(0,0,0,0.28);"></div>
<div class="a" style="left:2342px;top:285px;width:206px;height:39px;background:#f3f3f3;border-radius:6px;box-shadow:0 0 0 1px #cbcbcb, 0 1px 1.5px rgba(0,0,0,0.28);"></div>
<div class="t" style="left:2034.70px;top:292.14px;font-size:26.3px;color:#808080;font-weight:normal;font-style:normal;letter-spacing:0.548px;-webkit-text-stroke:0.6px #808080;">Import</div>
<div class="t" style="left:2203.00px;top:292.14px;font-size:26.3px;color:#000;font-weight:normal;font-style:normal;letter-spacing:0.319px;-webkit-text-stroke:0.6px #000;">Export</div>
<div class="t" style="left:2370.40px;top:292.14px;font-size:26.3px;color:#808080;font-weight:normal;font-style:normal;letter-spacing:-0.152px;-webkit-text-stroke:0.6px #808080;">Set as NULL</div>
<div class="a" style="left:1518px;top:392px;width:1019px;height:651px;background:#fff;border-top:1px solid #8e8e8e;border-left:1px solid #aaaaaa;border-right:1px solid #b8b8b8;border-bottom:1px solid #b8b8b8;box-sizing:border-box;"></div>
<div class="t" style="left:1495.00px;top:1108.14px;font-size:26.3px;color:#000;font-weight:normal;font-style:normal;letter-spacing:0.438px;-webkit-text-stroke:0.6px #000;">Type of data currently in cell: NULL</div>
<div class="t" style="left:1495.00px;top:1157.14px;font-size:26.3px;color:#000;font-weight:normal;font-style:normal;letter-spacing:0.462px;-webkit-text-stroke:0.6px #000;">0 byte(s)</div>
<div class="a" style="left:2422px;top:1126px;width:126px;height:38px;background:#f3f3f3;border-radius:6px;box-shadow:0 0 0 1px #cbcbcb, 0 1px 1.5px rgba(0,0,0,0.28);"></div>
<div class="t" style="left:2451.00px;top:1132.14px;font-size:26.3px;color:#808080;font-weight:normal;font-style:normal;letter-spacing:0.413px;-webkit-text-stroke:0.6px #808080;">Apply</div>
<div class="a" style="left:1469px;top:1223px;width:1117px;height:2px;background:#9a9a9a;"></div>
<div class="a" style="left:1469px;top:1225px;width:1117px;height:2px;background:#fbfbfb;"></div>
<div class="a" style="left:1469px;top:1227px;width:1117px;height:40px;background:linear-gradient(#efefef,#cdcdcd);"></div>
<div class="a" style="left:1469px;top:1267px;width:1117px;height:2px;background:#a9a9a9;"></div>
<div class="a" style="left:1474px;top:1231.5px;width:28px;height:28px;border-radius:50%;background:radial-gradient(#555 0%,#4a4a4a 60%,#3c3c3c 100%);"></div>
<div class="a" style="left:1510px;top:1231.5px;width:28px;height:28px;border-radius:50%;background:radial-gradient(#555 0%,#4a4a4a 60%,#3c3c3c 100%);"></div>
<svg class="a" style="left:1474px;top:1231.5px" width="28" height="28" viewBox="0 0 28 28"><path d="M9 9L19 19M19 9L9 19" stroke="#fff" stroke-width="4.2" stroke-linecap="square"/></svg>
<svg class="a" style="left:1510px;top:1231.5px" width="28" height="28" viewBox="0 0 28 28" shape-rendering="crispEdges"><rect x="7" y="13" width="10" height="8" fill="none" stroke="#fff" stroke-width="2"/><path d="M11 12V9H21V18H18" fill="none" stroke="#fff" stroke-width="2"/></svg>
<div class="t" style="left:2027.00px;top:1238.15px;font-size:21px;color:#000;font-weight:normal;font-style:normal;letter-spacing:-0.300px;-webkit-text-stroke:0.7px #000;">Remote</div>
<div class="t" style="left:1495.00px;top:1312.64px;font-size:26.3px;color:#000;font-weight:normal;font-style:normal;letter-spacing:0.597px;-webkit-text-stroke:0.6px #000;">Identity</div>
<div class="a" style="left:1601px;top:1304px;width:196px;height:40px;background:#fff;border-radius:6px;box-shadow:0 0 0 1px #c4c4c4, 0 1px 1.5px rgba(0,0,0,0.3);"></div>
<div class="a" style="left:1764px;top:1304px;width:33px;height:40px;background:linear-gradient(#6aa1f8,#2c6ff2);border-radius:0 6px 6px 0;"></div>
<svg class="a" style="left:1771.5px;top:1310.0px" width="18" height="28" viewBox="0 0 18 28"><path d="M3 10 L9 4 L15 10 M3 18 L9 24 L15 18" fill="none" stroke="#fff" stroke-width="2.4"/></svg>
<div class="a" style="left:1818px;top:1298px;width:52px;height:52px;background:linear-gradient(#f6f6f6,#eeeeee);border:2px solid #a9a9a9;box-sizing:border-box;"></div>
<svg class="a" style="left:1828px;top:1308px" width="32" height="32" viewBox="0 0 16 16"><g transform="translate(8,8)"><g fill="#cfcfcf" stroke="#8e8e8e" stroke-width="0.7"><path d="M-1.2 -7.5H1.2V-5.6L2.7 -5L4 -6.3L5.7 -4.6L4.4 -3.3L5 -1.8H7V0.6H5L4.4 2.1L5.7 3.4L4 5.1L2.7 3.8L1.2 4.4V6.4H-1.2V4.4L-2.7 3.8L-4 5.1L-5.7 3.4L-4.4 2.1L-5 0.6H-7V-1.8H-5L-4.4 -3.3L-5.7 -4.6L-4 -6.3L-2.7 -5L-1.2 -5.6Z"/></g><circle cx="0" cy="-0.6" r="1.8" fill="#fff" stroke="#8e8e8e" stroke-width="0.6"/></g><path d="M6 9H10V7H12L16.3 11.5L12 16H10V14H6Z" fill="#3f9420"/><path d="M7 10H11V9L14 11.5L11 14V13H7Z" fill="#a6d38e"/></svg>
<div class="a" style="left:2510px;top:1298px;width:52px;height:51px;background:#ececec;border:2px solid #cfcfcf;box-sizing:border-box;"></div>
<svg class="a" style="left:2520px;top:1308px" width="32" height="32" viewBox="0 0 16 16" shape-rendering="crispEdges"><path d="M3 2H5V15H3V14H1V4H2V3H3Z" fill="#c6c6c6"/><rect x="2" y="4" width="3" height="10" fill="#efefef"/><rect x="5" y="1" width="7" height="14" fill="#c8c8c8"/><rect x="6" y="2" width="5" height="12" fill="#dcdce0"/><rect x="6" y="2" width="5" height="1" fill="#ececec"/><rect x="7" y="4" width="4" height="1" fill="#b8b8b8"/><rect x="7" y="6" width="4" height="1" fill="#b8b8b8"/><path d="M6 9H10V7H12L16.3 11.5L12 16H10V14H6Z" fill="#92c47a" shape-rendering="auto"/><path d="M7 10H11V9L14 11.5L11 14V13H7Z" fill="#cde3c0" shape-rendering="auto"/></svg>
<div class="a" style="left:1494px;top:1378px;width:1067px;height:751px;background:#fff;border:1px solid #a2a2a2;box-sizing:border-box;"></div>
<div class="a" style="left:1495px;top:1379px;width:1065px;height:33px;background:#f5f5f5;"></div>
<div class="a" style="left:1495px;top:1412px;width:1065px;height:2px;background:#cfcfcf;"></div>
<div class="a" style="left:1694px;top:1385px;width:1px;height:23px;background:#d8d8d8;"></div>
<div class="a" style="left:1895px;top:1385px;width:1px;height:23px;background:#d8d8d8;"></div>
<div class="a" style="left:2095px;top:1385px;width:1px;height:23px;background:#d8d8d8;"></div>
<div class="t" style="left:1504.60px;top:1383.88px;font-size:22.5px;color:#000;font-weight:normal;font-style:normal;letter-spacing:-0.458px;-webkit-text-stroke:0.7px #000;">Name</div>
<div class="t" style="left:1704.30px;top:1383.88px;font-size:22.5px;color:#000;font-weight:normal;font-style:normal;letter-spacing:0.438px;-webkit-text-stroke:0.7px #000;">Commit</div>
<div class="t" style="left:1904.00px;top:1383.88px;font-size:22.5px;color:#000;font-weight:normal;font-style:normal;letter-spacing:0.635px;-webkit-text-stroke:0.7px #000;">Last modified</div>
<div class="t" style="left:2104.00px;top:1383.88px;font-size:22.5px;color:#000;font-weight:normal;font-style:normal;letter-spacing:-0.254px;-webkit-text-stroke:0.7px #000;">Size</div>
<div class="a" style="left:1470px;top:2154px;width:268px;height:22px;background:#e1e1e1;border-radius:0 0 0 7px;"></div>
<div class="a" style="left:2318px;top:2154px;width:268px;height:22px;background:#e1e1e1;border-radius:0 0 7px 0;"></div>
<div class="a" style="left:1744px;top:2157px;width:569px;height:40px;background:#fff;border-radius:7px 7px 0 0;box-shadow:0 0 0 1px #cacaca;"></div>
<div class="a" style="left:2174px;top:2157px;width:139px;height:40px;background:linear-gradient(#6aa1f8,#2c6ff2);border-radius:0 7px 0 0;"></div>
<div class="a" style="left:1888px;top:2160px;width:1px;height:36px;background:#dcdcdc;"></div>
<div class="a" style="left:1985px;top:2160px;width:1px;height:36px;background:#dcdcdc;"></div>
<div class="t" style="left:1763.70px;top:2161.90px;font-size:26px;color:#000;font-weight:normal;font-style:normal;letter-spacing:-0.260px;-webkit-text-stroke:0.6px #000;">SQL Log</div>
<div class="t" style="left:1914.70px;top:2161.90px;font-size:26px;color:#000;font-weight:normal;font-style:normal;letter-spacing:0.150px;-webkit-text-stroke:0.6px #000;">Plot</div>
<div class="t" style="left:2011.50px;top:2161.90px;font-size:26px;color:#000;font-weight:normal;font-style:normal;letter-spacing:-0.105px;-webkit-text-stroke:0.6px #000;">DB Schema</div>
<div class="t" style="left:2201.00px;top:2161.90px;font-size:26px;color:#fff;font-weight:normal;font-style:normal;letter-spacing:0.000px;-webkit-text-stroke:0.6px #fff;">Remote</div>
<div class="a" style="left:112px;top:2196px;width:2474px;height:1px;background:#6e6e6e;"></div>
</body></html>
